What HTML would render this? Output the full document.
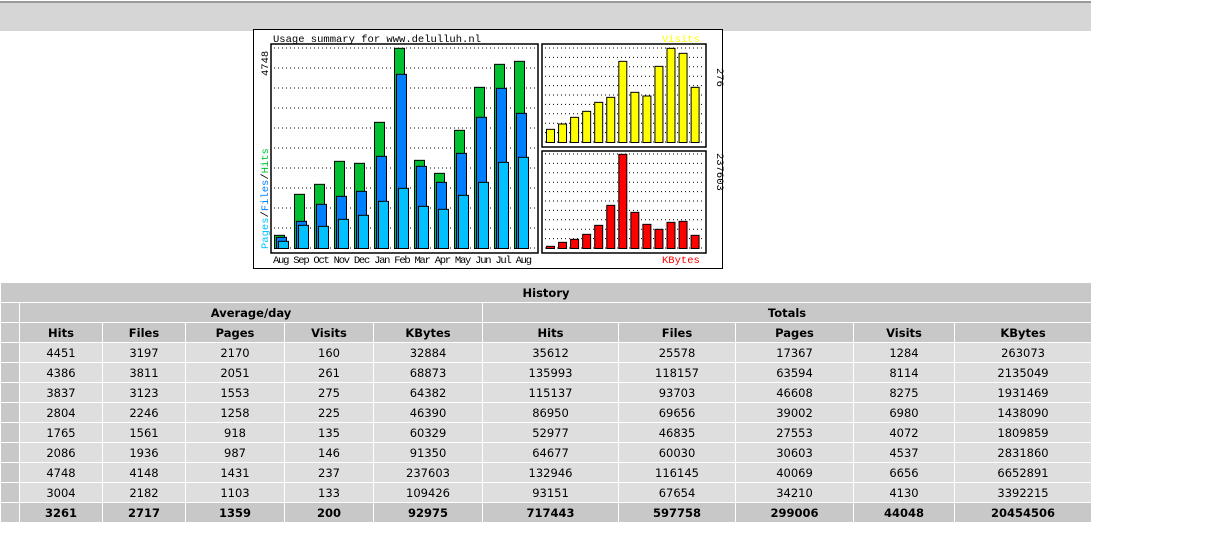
<!DOCTYPE html>
<html><head><meta charset="utf-8"><style>
body{margin:0;width:1230px;height:542px;background:#fff;position:relative;overflow:hidden}
#bar{position:absolute;left:0;top:0;width:1091px;height:30px;background:#d6d6d6;border-top:2px solid #999;box-sizing:border-box;top:1px}
#chart{position:absolute;left:0;top:0}
table{position:absolute;left:0;top:282px;width:1091px;border-collapse:collapse;font-family:"DejaVu Sans","Liberation Sans",sans-serif;font-size:11.5px;color:#000;table-layout:fixed}
td,th{height:19px;padding:0;text-align:center;border:1px solid #fff;background:#dedede;font-weight:normal}
th{background:#c8c8c8;font-weight:bold}
tr.t td{background:#c8c8c8;font-weight:bold}
td.s{background:#c8c8c8}
</style></head><body>
<div id="bar"></div>
<svg id="chart" width="1230" height="280" xmlns="http://www.w3.org/2000/svg" font-family="Liberation Mono, monospace">
<rect x="253.5" y="29.5" width="469" height="239" fill="#fff" stroke="#000"/>
<rect x="271" y="44" width="267" height="209" fill="none" stroke="#000" stroke-width="1.5"/>
<rect x="542" y="44" width="164" height="103" fill="none" stroke="#000" stroke-width="1.5"/>
<rect x="542" y="151" width="164" height="102" fill="none" stroke="#000" stroke-width="1.5"/>
<g id="g"></g>
<text x="273" y="42" font-size="10.5">Usage summary for www.delulluh.nl</text>
<text x="662" y="42" font-size="10.5" fill="#ffff00">Visits</text>
<text x="662" y="263" font-size="10.5" fill="#ff0000">KBytes</text>
<text transform="translate(268,76) rotate(-90)" font-size="10.5">4748</text>
<text transform="translate(717,68) rotate(90)" font-size="10.5">276</text>
<text transform="translate(717,153) rotate(90)" font-size="10.5">237603</text>
<text transform="translate(268,249) rotate(-90)" font-size="10.5"><tspan fill="#00c0ff">Pages</tspan>/<tspan fill="#0080ff">Files</tspan>/<tspan fill="#00c030">Hits</tspan></text>
<text x="273" y="263" font-size="10.5" textLength="259" lengthAdjust="spacing">Aug Sep Oct Nov Dec Jan Feb Mar Apr May Jun Jul Aug</text>
</svg>
<script>
var g=document.getElementById('g'),s='';
function y(z){return z/3+25}
for(var i=0;i<11;i++){var yy=48+i*20;s+='<line x1="274" x2="535" y1="'+yy+'" y2="'+yy+'" stroke="#000" stroke-dasharray="1,3"/>';}
for(var i=0;i<11;i++){var yy=48+i*9.4;s+='<line x1="545" x2="703" y1="'+yy+'" y2="'+yy+'" stroke="#000" stroke-dasharray="1,3"/>';}
for(var i=0;i<11;i++){var yy=154+i*9.4;s+='<line x1="545" x2="703" y1="'+yy+'" y2="'+yy+'" stroke="#000" stroke-dasharray="1,3"/>';}
var G=[631,508,478,409,415,292,70,406,445,316,187,118,109],B=[637,589,538,514,499,394,148,424,472,385,277,190,265],C=[649,601,604,583,571,529,490,544,553,511,472,412,397];
function r(x,t,w,b,c){return '<rect x="'+x+'" y="'+t+'" width="'+w+'" height="'+(b-t)+'" fill="'+c+'" stroke="#000"/>';}
for(var i=0;i<13;i++){var x=274.5+i*20;s+=r(x,y(G[i]),10,248.5,'#00c030')+r(x+2,y(B[i]),10,248.5,'#0080ff')+r(x+4,y(C[i]),10,248.5,'#00c0ff');}
var V=[313,297,277,259,232,217,109,202,213,124,70,85,187],K=[664,652,643,628,601,541,388,562,598,613,592,589,631];
for(var i=0;i<13;i++){var x=546.5+i*12.05;s+=r(x,y(V[i]),8,142.5,'#ffff00')+r(x,y(K[i]),8,248.5,'#ff0000');}
g.innerHTML=s;
</script>
<table>
<colgroup><col style="width:19px"><col style="width:83px"><col style="width:83px"><col style="width:99px"><col style="width:89px"><col style="width:109px"><col style="width:136px"><col style="width:117px"><col style="width:118px"><col style="width:101px"><col style="width:137px"></colgroup>
<tr><th colspan="11">History</th></tr>
<tr><th></th><th colspan="5">Average/day</th><th colspan="5">Totals</th></tr>
<tr><th></th><th>Hits</th><th>Files</th><th>Pages</th><th>Visits</th><th>KBytes</th><th>Hits</th><th>Files</th><th>Pages</th><th>Visits</th><th>KBytes</th></tr>
<tr><td class="s"></td><td>4451</td><td>3197</td><td>2170</td><td>160</td><td>32884</td><td>35612</td><td>25578</td><td>17367</td><td>1284</td><td>263073</td></tr>
<tr><td class="s"></td><td>4386</td><td>3811</td><td>2051</td><td>261</td><td>68873</td><td>135993</td><td>118157</td><td>63594</td><td>8114</td><td>2135049</td></tr>
<tr><td class="s"></td><td>3837</td><td>3123</td><td>1553</td><td>275</td><td>64382</td><td>115137</td><td>93703</td><td>46608</td><td>8275</td><td>1931469</td></tr>
<tr><td class="s"></td><td>2804</td><td>2246</td><td>1258</td><td>225</td><td>46390</td><td>86950</td><td>69656</td><td>39002</td><td>6980</td><td>1438090</td></tr>
<tr><td class="s"></td><td>1765</td><td>1561</td><td>918</td><td>135</td><td>60329</td><td>52977</td><td>46835</td><td>27553</td><td>4072</td><td>1809859</td></tr>
<tr><td class="s"></td><td>2086</td><td>1936</td><td>987</td><td>146</td><td>91350</td><td>64677</td><td>60030</td><td>30603</td><td>4537</td><td>2831860</td></tr>
<tr><td class="s"></td><td>4748</td><td>4148</td><td>1431</td><td>237</td><td>237603</td><td>132946</td><td>116145</td><td>40069</td><td>6656</td><td>6652891</td></tr>
<tr><td class="s"></td><td>3004</td><td>2182</td><td>1103</td><td>133</td><td>109426</td><td>93151</td><td>67654</td><td>34210</td><td>4130</td><td>3392215</td></tr>
<tr class="t"><td></td><td>3261</td><td>2717</td><td>1359</td><td>200</td><td>92975</td><td>717443</td><td>597758</td><td>299006</td><td>44048</td><td>20454506</td></tr>
</table>
</body></html>
